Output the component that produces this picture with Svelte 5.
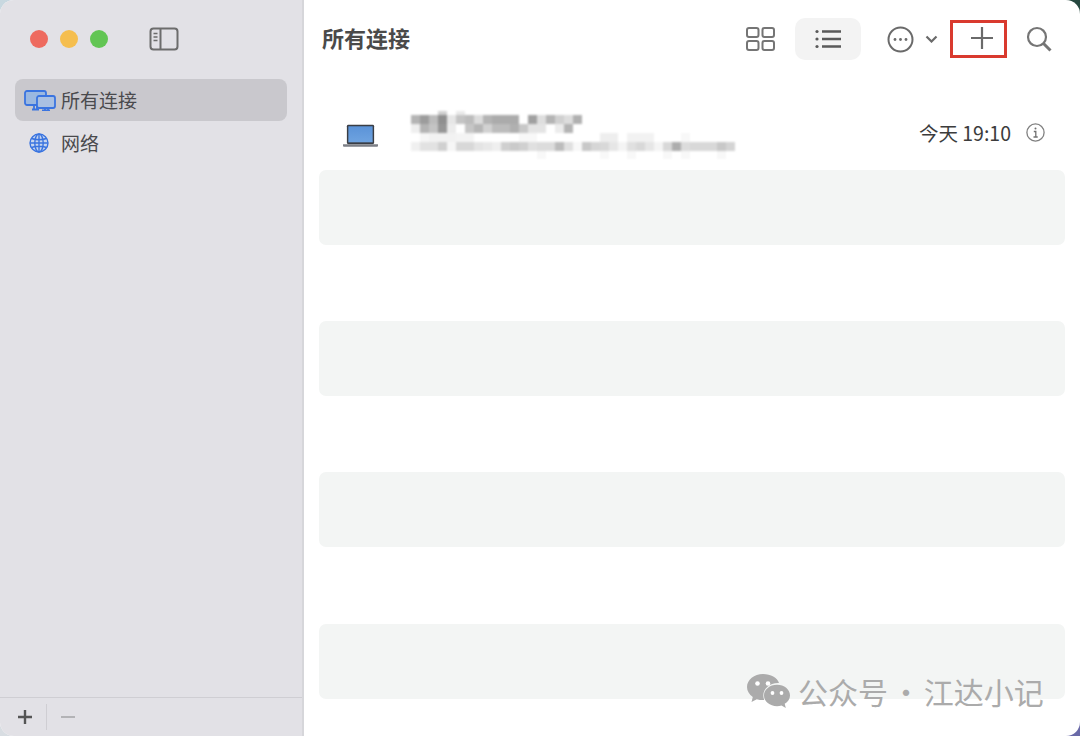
<script lang="ts">
    // grey values of the mosaic over the hidden hostname, 0 = nothing there
    const mosaic: number[][] = [
        [0,0,0,0xd0,0,0xea],
        [0xb4,0x9c,0xbc,0x8f,0xe6,0xc4,0xbc,0xdc,0xb4,0xab,0xab,0xab,0,0xa0,0xde,0xb4,0xd0,0xdd,0xb0],
        [0xef,0xb4,0xc4,0x96,0xec,0,0xc6,0xb6,0xd2,0xbc,0xbc,0xb0,0xc8,0xe4,0xe4,0,0xec,0xb4],
        [0,0xf6,0xf2,0xf2,0xf2,0xf4,0xf4,0,0,0,0,0,0xf8,0xf8,0,0,0,0,0,0,0,0xee,0xee,0,0xf2,0xf2,0xf2,0,0,0,0xf8],
        [0xf0,0xe2,0xe2,0xd0,0xf6,0xd8,0xd8,0xe4,0xe8,0xef,0xcf,0xca,0xd0,0xe0,0xdc,0xdc,0xbc,0xe0,0xf8,0xc8,0xd6,0xd8,0xe6,0xf4,0xe0,0xd8,0xe6,0xf4,0xd8,0xad,0xdc,0xd8,0xd8,0xd8,0xc8,0xd4],
        [0,0,0,0,0,0,0,0,0,0,0,0,0,0,0xf8,0,0,0,0,0,0,0xf8,0,0,0xf8,0,0,0,0xf8,0,0xf8,0,0,0,0xf8]
    ];
    const rowHeights = [4, 9, 9, 9, 9, 8];
    const placeholders = [0, 1, 2, 3];
</script>

<div class="desk">
    <div class="window">
        <aside class="sidebar">
            <div class="titlebar">
                <span class="light red"></span>
                <span class="light yellow"></span>
                <span class="light green"></span>
                <svg class="toggle" width="30" height="24" viewBox="0 0 30 24" fill="none" stroke="#6c6c6c" stroke-width="2">
                    <rect x="1.5" y="1.5" width="27" height="21" rx="3" />
                    <path d="M11.5 1.5v21" />
                    <path d="M4.5 6.5h4M4.5 10h4M4.5 13.5h4" stroke-width="1.3" />
                </svg>
            </div>
            <nav class="nav">
                <div class="item selected">
                    <svg width="32" height="21" viewBox="0 0 32 21" fill="none" stroke="#3a74e0" stroke-width="1.8">
                        <rect x="1" y="1" width="21" height="14" rx="2" fill="#9bb8e0" />
                        <path d="M8 19.5h7M10 15v4M13 15v4" />
                        <rect x="13" y="6" width="18" height="12" rx="2" fill="#a9c0e2" />
                        <path d="M18 20.5h8M21 18v2M24 18v2" />
                    </svg>
                    <span>所有连接</span>
                </div>
                <div class="item">
                    <svg class="globe" width="20" height="20" viewBox="0 0 20 20" fill="none" stroke="#3a74e0" stroke-width="1.4">
                        <circle cx="10" cy="10" r="9" fill="#c6d5ee" />
                        <ellipse cx="10" cy="10" rx="4.2" ry="9" />
                        <path d="M10 1v18M1.2 10h17.6M2.6 5.5c4 1.6 10.8 1.6 14.8 0M2.6 14.5c4-1.6 10.8-1.6 14.8 0" />
                    </svg>
                    <span>网络</span>
                </div>
            </nav>
            <div class="footer">
                <svg width="14" height="14" viewBox="0 0 14 14" stroke="#555" stroke-width="2.4">
                    <path d="M7 0v14M0 7h14" />
                </svg>
                <span class="footsep"></span>
                <span class="minus"></span>
            </div>
        </aside>

        <main class="main">
            <header class="toolbar">
                <h1>所有连接</h1>
                <svg class="grid-icon" width="29" height="24" viewBox="0 0 29 24" fill="none" stroke="#757575" stroke-width="2">
                    <rect x="1" y="1" width="11.5" height="9" rx="2" />
                    <rect x="16.5" y="1" width="11.5" height="9" rx="2" />
                    <rect x="1" y="14" width="11.5" height="9" rx="2" />
                    <rect x="16.5" y="14" width="11.5" height="9" rx="2" />
                </svg>
                <div class="listbtn">
                    <svg width="26" height="20" viewBox="0 0 26 20" fill="none" stroke="#5a5a5a" stroke-width="2.4">
                        <path d="M7 2.5h19M7 10h19M7 17.5h19" />
                        <circle cx="2" cy="2.5" r="1.6" fill="#5a5a5a" stroke="none" />
                        <circle cx="2" cy="10" r="1.6" fill="#5a5a5a" stroke="none" />
                        <circle cx="2" cy="17.5" r="1.6" fill="#5a5a5a" stroke="none" />
                    </svg>
                </div>
                <svg class="more" width="27" height="27" viewBox="0 0 27 27" fill="none" stroke="#6a6a6a" stroke-width="2">
                    <circle cx="13.5" cy="13.5" r="12" />
                    <circle cx="8" cy="13.5" r="1.4" fill="#6a6a6a" stroke="none" />
                    <circle cx="13.5" cy="13.5" r="1.4" fill="#6a6a6a" stroke="none" />
                    <circle cx="19" cy="13.5" r="1.4" fill="#6a6a6a" stroke="none" />
                </svg>
                <svg class="chev" width="13" height="8" viewBox="0 0 13 8" fill="none" stroke="#6a6a6a" stroke-width="2.2">
                    <path d="M1.5 1.5l5 5 5-5" />
                </svg>
                <div class="addbtn">
                    <svg width="22" height="22" viewBox="0 0 22 22" stroke="#6a6a6a" stroke-width="2.2">
                        <path d="M11 0v22M0 11h22" />
                    </svg>
                </div>
                <svg class="search" width="27" height="27" viewBox="0 0 27 27" fill="none" stroke="#757575" stroke-width="2.2">
                    <circle cx="11" cy="11" r="9" />
                    <path d="M17.5 17.5l7 7" stroke-width="3" />
                </svg>
            </header>

            <div class="list">
                <div class="conn">
                    <svg class="laptop" width="35" height="24" viewBox="0 0 36 24">
                        <defs>
                            <linearGradient id="screen" x1="0" y1="0" x2="0" y2="1">
                                <stop offset="0" stop-color="#5b93d8" />
                                <stop offset="1" stop-color="#6ea3e0" />
                            </linearGradient>
                        </defs>
                        <rect x="4" y="0.5" width="28" height="20" rx="1.5" fill="#3a3d44" />
                        <rect x="5.5" y="2" width="25" height="16.5" fill="url(#screen)" />
                        <path d="M0 20.5h36v1.5q0 1-1 1H1q-1 0-1-1z" fill="#7c7f86" />
                    </svg>
                    <div class="mosaic">
                        {#each mosaic as row, r}
                            <div class="mrow" style={`height:${rowHeights[r]}px`}>
                                {#each row as g}
                                    <i style={g ? `background:rgb(${g},${g},${g})` : ""}></i>
                                {/each}
                            </div>
                        {/each}
                    </div>
                    <span class="time">今天 19:10</span>
                    <svg class="info" width="19" height="19" viewBox="0 0 19 19" fill="none" stroke="#808080" stroke-width="1.3">
                        <circle cx="9.5" cy="9.5" r="8.6" />
                        <circle cx="9.5" cy="5.6" r="1" fill="#707070" stroke="none" />
                        <path d="M7.8 8.5h2v5.5M7.5 14h4.2" stroke="#707070" />
                    </svg>
                </div>
                <div class="cards">
                    {#each placeholders as p (p)}
                        <div class="card"></div>
                    {/each}
                </div>
            </div>
        </main>
    </div>

    <div class="watermark">
        <svg width="43" height="35" viewBox="0 0 43 35">
            <path d="M16 0C7.2 0 0 5.8 0 13c0 4 2.3 7.6 5.8 10L4.500 28l5.300-2.800c2 .6 4 .9 6.200.9h1.200c-.6-1.500-.9-3-.9-4.600 0-7 6.500-12.500 14.600-12.500h1.100C30.300 3.600 23.800 0 16 0z" fill="#ababab" />
            <circle cx="10.5" cy="9.5" r="2.3" fill="#fff" />
            <circle cx="21" cy="9.5" r="2.3" fill="#fff" />
            <path d="M43 21.500c0-6-5.800-10.700-13-10.700s-13 4.800-13 10.700 5.800 10.700 13 10.700c1.600 0 3.100-.2 4.500-.7l4.300 2.500-1.100-4.200c3.200-2 5.300-4.900 5.300-8.300z" fill="#ababab" />
            <circle cx="25.5" cy="19" r="1.9" fill="#fff" />
            <circle cx="34.5" cy="19" r="1.9" fill="#fff" />
        </svg>
        <span>公众号 · 江达小记</span>
    </div>
</div>

<style>
    :global(body) {
        margin: 0;
    }
    .desk {
        position: relative;
        width: 1080px;
        height: 736px;
        overflow: hidden;
        font-family: "Noto Sans CJK SC", "Liberation Sans", sans-serif;
        background: conic-gradient(#26483f 0 25%, #6a6aa8 25% 50%, #d8dde2 50% 75%, #c8d8e0 75% 100%);
    }
    .window {
        display: flex;
        height: 100%;
        border-radius: 14px;
        overflow: hidden;
        background: #fff;
    }

    /* sidebar */
    .sidebar {
        width: 304px;
        box-sizing: border-box;
        flex: none;
        display: flex;
        flex-direction: column;
        background: #e2e1e6;
        border-right: 2px solid #d6d6da;
    }
    .titlebar {
        height: 79px;
        box-sizing: border-box;
        display: flex;
        align-items: center;
        padding: 0 0 1px 30px;
        gap: 12px;
    }
    .light {
        width: 18px;
        height: 18px;
        border-radius: 50%;
    }
    .red { background: #ee6a5f; }
    .yellow { background: #f5be4f; }
    .green { background: #62c554; }
    .toggle {
        margin-left: 29px;
    }
    .nav {
        display: flex;
        flex-direction: column;
        padding: 0 15px;
        gap: 1px;
    }
    .item {
        height: 42px;
        display: flex;
        align-items: center;
        padding-left: 9px;
        gap: 5px;
        border-radius: 8px;
        font-size: 19px;
        color: #4a4a4d;
    }
    .item span {
        margin-bottom: 2px;
    }
    .item.selected {
        background: #c9c8cd;
    }
    .globe {
        margin: 0 7px 0 5px;
    }
    .footer {
        margin-top: auto;
        height: 39px;
        box-sizing: border-box;
        border-top: 1px solid #cfced3;
        display: flex;
        align-items: center;
        padding-left: 18px;
    }
    .footsep {
        width: 1px;
        height: 26px;
        background: #cfced3;
        margin: 0 14px;
    }
    .minus {
        width: 14px;
        height: 2px;
        background: #b3b3b6;
    }

    /* main pane */
    .main {
        flex: 1;
        min-width: 0;
        display: flex;
        flex-direction: column;
    }
    .toolbar {
        height: 78px;
        flex: none;
        display: flex;
        align-items: center;
        padding: 0 27px 0 18px;
    }
    h1 {
        margin: 0 auto 5px 0;
        font-size: 22px;
        font-weight: 700;
        color: #4a4a4a;
    }
    .listbtn {
        width: 66px;
        height: 42px;
        margin-left: 20px;
        border-radius: 10px;
        background: #f3f3f3;
        display: flex;
        align-items: center;
        justify-content: center;
    }
    .more {
        margin-left: 26px;
    }
    .chev {
        margin-left: 11px;
    }
    .addbtn {
        width: 57px;
        height: 38px;
        box-sizing: border-box;
        margin-left: 12px;
        padding: 0 0 2px 6px;
        border: 3px solid #d93a2e;
        display: flex;
        align-items: center;
        justify-content: center;
    }
    .search {
        margin-left: 19px;
    }
    .list {
        padding: 0 15px;
    }
    .conn {
        height: 92px;
        display: flex;
        align-items: center;
    }
    .laptop {
        margin-left: 24px;
        margin-top: 23px;
    }
    .mosaic {
        margin-left: 33px;
        margin-top: 22px;
        filter: blur(0.9px);
    }
    .mrow {
        display: flex;
    }
    .mrow i {
        width: 9px;
        flex: none;
    }
    .time {
        margin-left: auto;
        margin-top: 16px;
        font-size: 19.5px;
        color: #3c3c3c;
    }
    .info {
        margin-left: 15px;
        margin-right: 20px;
        margin-top: 16px;
    }
    .cards {
        display: flex;
        flex-direction: column;
        gap: 76.2px;
    }
    .card {
        height: 75px;
        border-radius: 7px;
        background: #f3f5f4;
    }

    .watermark {
        position: absolute;
        left: 747px;
        top: 670px;
        display: flex;
        align-items: center;
        gap: 8px;
        font-size: 30px;
        word-spacing: -3.8px;
        line-height: 42px;
        color: #ababab;
        white-space: nowrap;
    }
</style>
